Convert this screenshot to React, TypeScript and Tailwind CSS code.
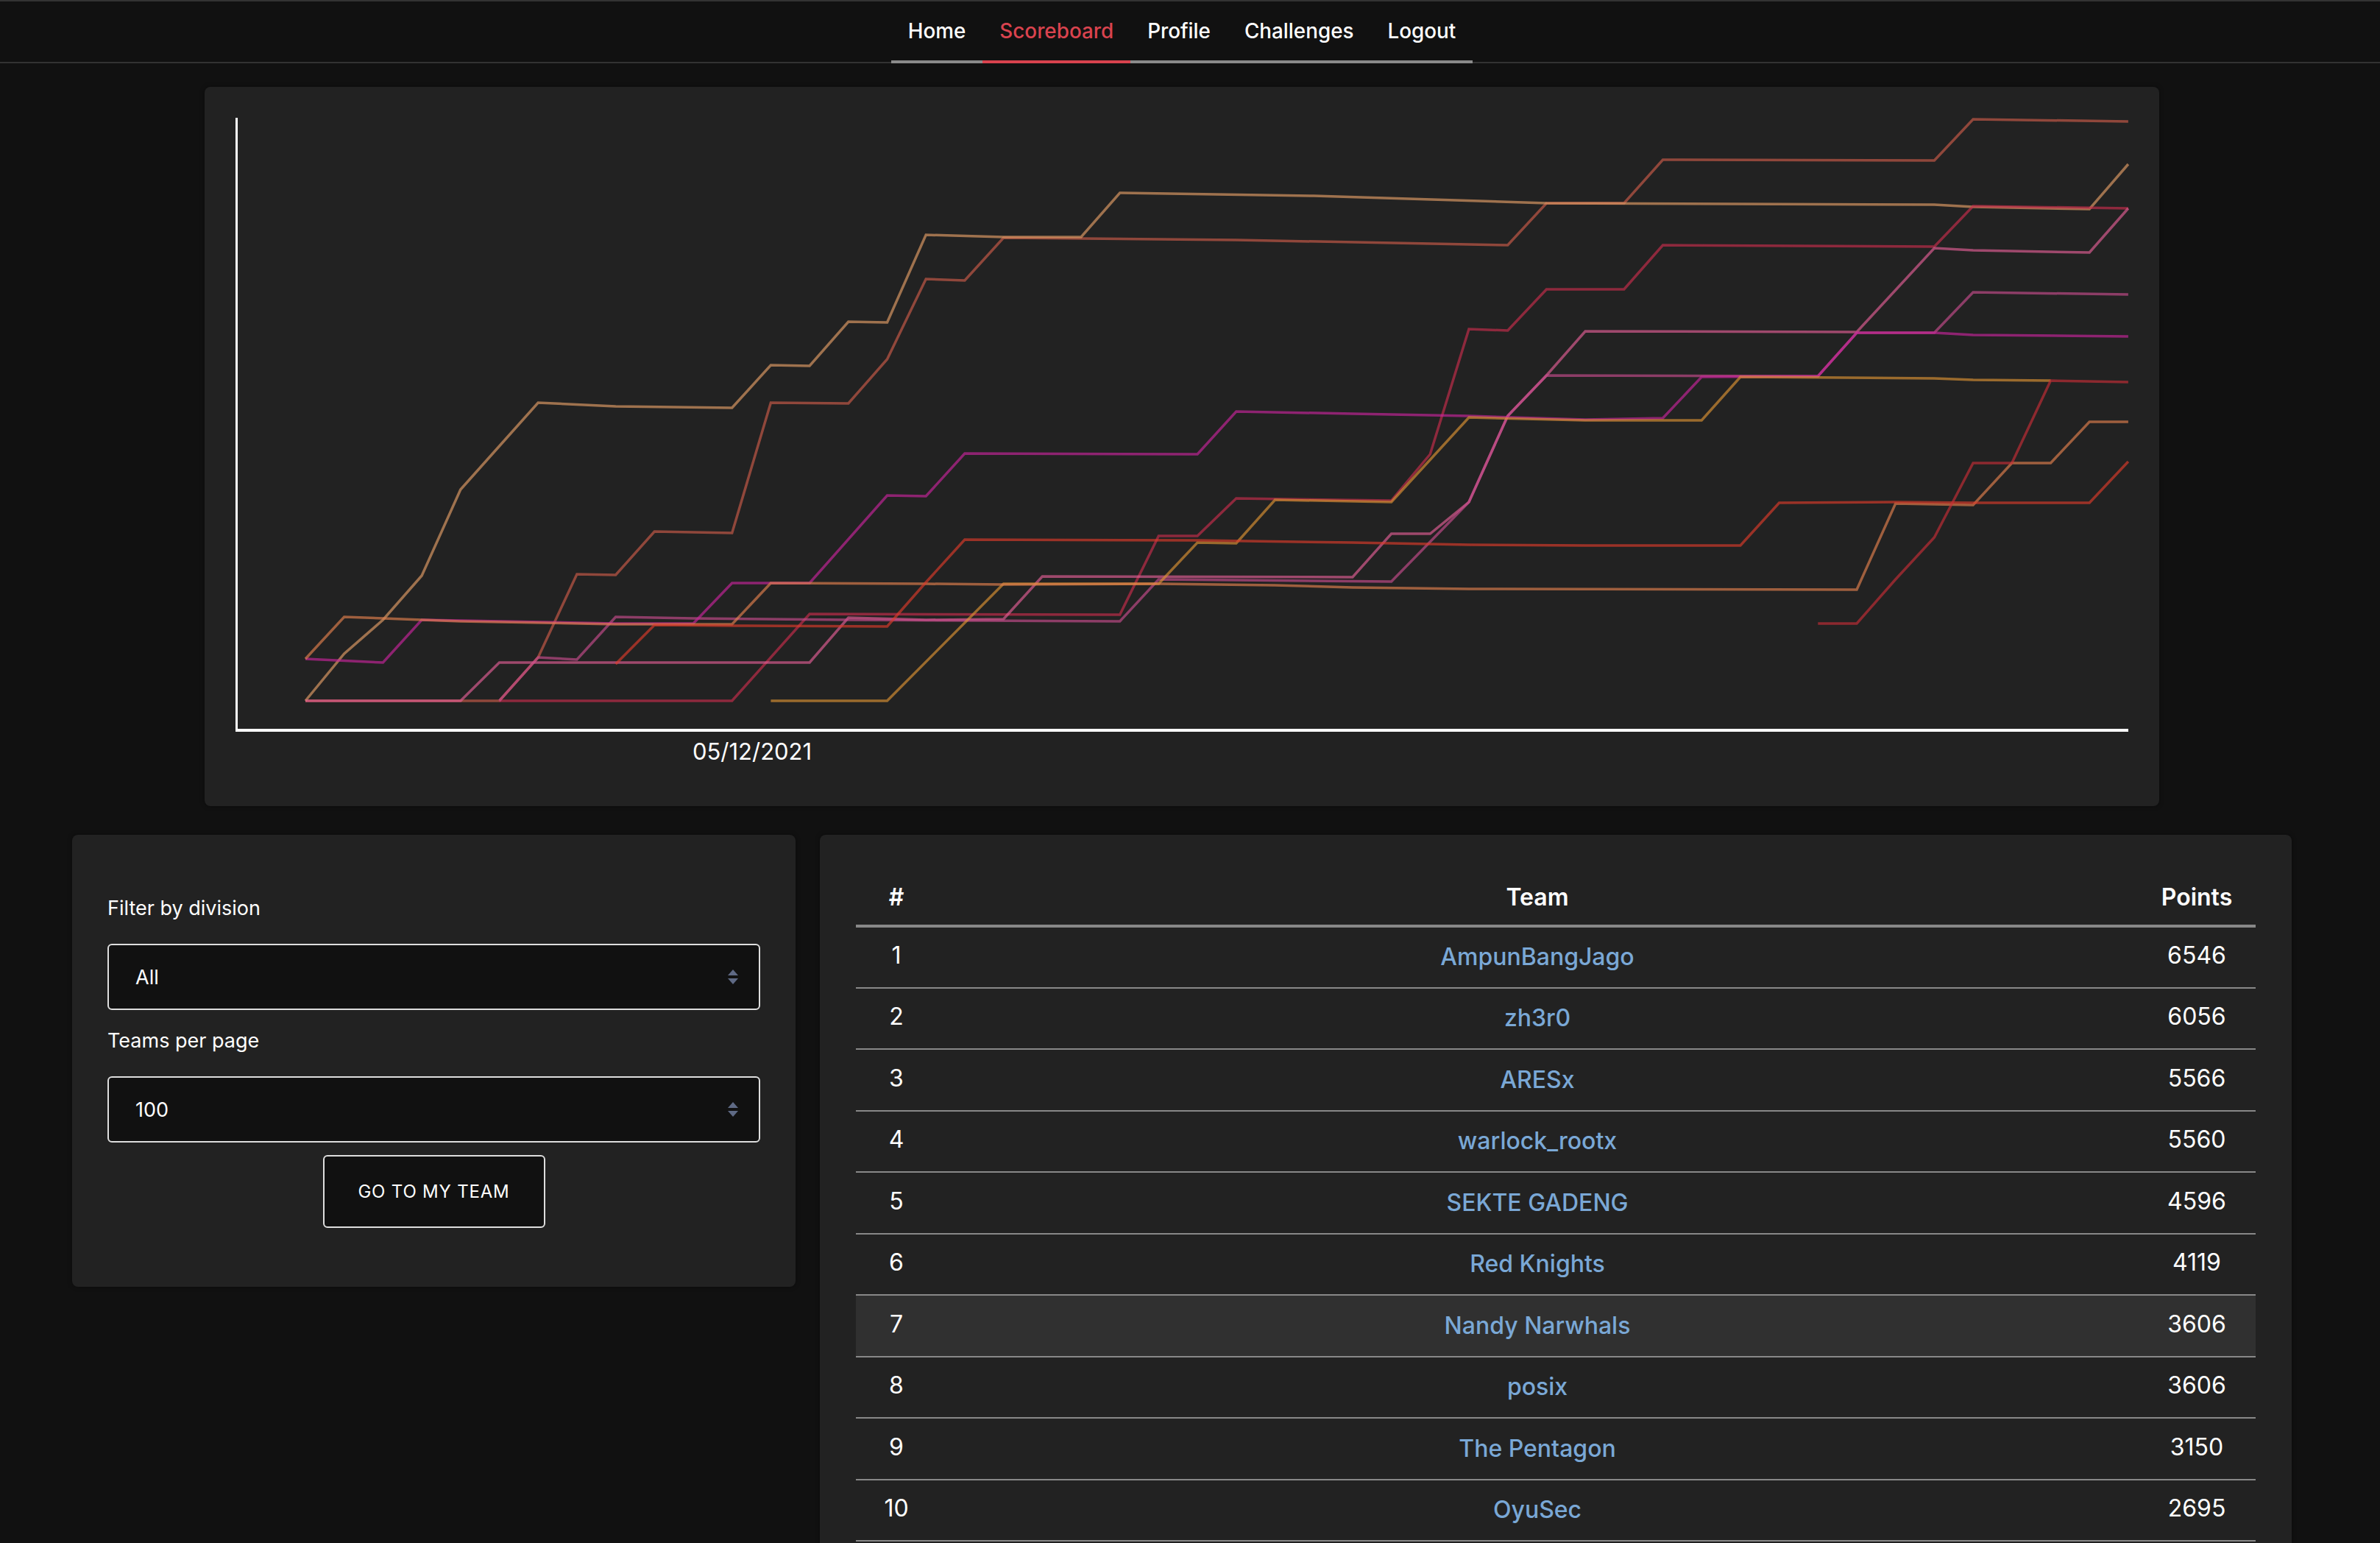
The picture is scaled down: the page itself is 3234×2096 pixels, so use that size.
const chartSeries = [
  {
    color: "#cc5c4a",
    points: [[0, 952], [5, 952], [6, 893], [7, 780], [8, 781], [9, 722], [11, 724], [12, 547], [14, 548], [15, 488], [16, 379], [17, 381], [18, 323], [24, 326], [31, 333], [32, 276], [34, 276], [35, 217], [42, 218], [43, 162], [47, 165]],
  },
  {
    color: "#e49e67",
    points: [[0, 952], [1, 888], [2, 842], [3, 782], [4, 665], [5, 606], [6, 547], [8, 552], [11, 554], [12, 496], [13, 497], [14, 437], [15, 438], [16, 319], [18, 322], [20, 322], [21, 262], [26, 266], [32, 276], [42, 278], [43, 281], [46, 284], [47, 223]],
  },
  {
    color: "#ca2e4d",
    points: [[5, 952], [11, 952], [13, 834], [21, 835], [22, 728], [23, 728], [24, 677], [28, 680], [29, 617], [30, 447], [31, 449], [32, 393], [34, 393], [35, 333], [42, 335], [43, 280], [47, 283]],
  },
  {
    color: "#e46097",
    points: [[0, 952], [4, 952], [5, 900], [13, 900], [14, 839], [16, 842], [18, 841], [19, 783], [27, 784], [28, 725], [29, 725], [30, 682], [31, 565], [32, 510], [33, 450], [40, 451], [42, 337], [43, 340], [46, 343], [47, 283]],
  },
  {
    color: "#c84d8e",
    points: [[5, 952], [6, 893], [7, 896], [8, 838], [10, 840], [14, 842], [21, 844], [22, 787], [28, 790], [30, 682], [31, 565], [32, 510], [39, 511], [40, 452], [42, 452], [43, 397], [47, 400]],
  },
  {
    color: "#ca259d",
    points: [[0, 895], [2, 900], [3, 842], [8, 847], [10, 847], [11, 792], [13, 792], [15, 673], [16, 674], [17, 616], [23, 617], [24, 559], [27, 562], [30, 565], [33, 570], [35, 568], [36, 512], [39, 511], [40, 452], [42, 452], [43, 455], [47, 457]],
  },
  {
    color: "#dd9434",
    points: [[12, 952], [15, 952], [18, 793], [22, 793], [23, 737], [24, 738], [25, 679], [28, 682], [30, 567], [33, 571], [36, 571], [37, 512], [42, 514], [43, 516], [45, 517]],
  },
  {
    color: "#e4814e",
    points: [[0, 895], [1, 838], [3, 842], [4, 844], [8, 848], [11, 848], [12, 792], [16, 793], [18, 794], [22, 793], [25, 795], [27, 798], [30, 800], [40, 801], [41, 684], [43, 686], [44, 629], [45, 629], [46, 573], [47, 573]],
  },
  {
    color: "#dd3c2b",
    points: [[8, 902], [9, 849], [11, 850], [15, 851], [16, 791], [17, 733], [23, 734], [27, 737], [30, 740], [33, 741], [37, 741], [38, 683], [41, 682], [43, 683], [46, 683], [47, 627]],
  },
  {
    color: "#c82e37",
    points: [[39, 847], [40, 847], [41, 787], [42, 730], [43, 629], [44, 629], [45, 517], [47, 519]],
  },
];

const teams = [
  { rank: 1, name: "AmpunBangJago", points: 6546 },
  { rank: 2, name: "zh3r0", points: 6056 },
  { rank: 3, name: "ARESx", points: 5566 },
  { rank: 4, name: "warlock_rootx", points: 5560 },
  { rank: 5, name: "SEKTE GADENG", points: 4596 },
  { rank: 6, name: "Red Knights", points: 4119 },
  { rank: 7, name: "Nandy Narwhals", points: 3606 },
  { rank: 8, name: "posix", points: 3606 },
  { rank: 9, name: "The Pentagon", points: 3150 },
  { rank: 10, name: "OyuSec", points: 2695 },
];

const navLinks = ["Home", "Scoreboard", "Profile", "Challenges", "Logout"];

function Chart() {
  // coordinates are page pixels, offset to the panel origin
  const toPath = (points: number[][]) =>
    points.map(([i, y]) => `${(415 + i * 52.7 - 278).toFixed(1)},${y - 118}`).join(" ");

  return (
    <svg width="2656" height="977" viewBox="0 0 2656 977" className="block">
      {chartSeries.map((series) => (
        <polyline
          key={series.color}
          points={toPath(series.points)}
          fill="none"
          stroke={series.color}
          strokeWidth="3.5"
          strokeOpacity="0.65"
          strokeLinejoin="miter"
        />
      ))}
      <path d="M43.5 42V874" fill="none" stroke="#fff" strokeWidth="3" />
      <path d="M42 874H2614" fill="none" stroke="#fff" strokeWidth="4" />
      <text x="744" y="914" fill="#fff" textAnchor="middle" fontSize="31" fontFamily="Inter, sans-serif">
        05/12/2021
      </text>
    </svg>
  );
}

function SelectBox({ value }: { value: string }) {
  return (
    <div className="flex h-[90px] items-center justify-between rounded-md border-2 border-[#dedede] bg-[#111111] pl-[36px] pr-[27px] text-[27px] text-white">
      <span className="pt-[2px]">{value}</span>
      <svg width="16" height="20" viewBox="0 0 16 20">
        <path d="M8 0L15 8H1Z M1 12H15L8 20Z" fill="#5f6a85" />
      </svg>
    </div>
  );
}

export default function App() {
  return (
    <div className="h-[2096px] overflow-hidden bg-[#111111] font-['Inter',sans-serif] text-white">
      <nav className="flex h-[86px] justify-center border-y-2 border-[#333333] pr-[22px]">
        <ul className="flex h-[86px] -mt-0.5 border-b-4 border-[#8a8a8a] text-[27.8px] font-medium">
          {navLinks.map((link) => (
            <li
              key={link}
              className={
                link === "Scoreboard"
                  ? "-mb-1 border-b-4 border-[#d9434e] px-[23px] pt-[22px] text-[#d9434e]"
                  : "px-[23px] pt-[22px]"
              }
            >
              {link}
            </li>
          ))}
        </ul>
      </nav>

      <div className="mr-[22px]">
        <section className="mx-[278px] mt-8 h-[977px] rounded-lg bg-[#222222] shadow-[0_0_6px_rgba(0,0,0,0.4)]">
          <Chart />
        </section>

        <div className="mx-[98px] mt-[39px] flex items-start gap-[33px]">
          <aside className="flex h-[614px] w-[983px] shrink-0 flex-col rounded-lg bg-[#222222] px-12 pt-[82px] shadow-[0_0_6px_rgba(0,0,0,0.4)]">
            <label className="text-[27px] leading-[36px]">Filter by division</label>
            <div className="mt-[30px]">
              <SelectBox value="All" />
            </div>
            <label className="mt-[24px] text-[27px] leading-[36px]">Teams per page</label>
            <div className="mt-[30px]">
              <SelectBox value="100" />
            </div>
            <button className="mx-auto mt-[17px] h-[99px] w-[302px] rounded-md border-2 border-[#dedede] bg-[#111111] text-[24px] tracking-[0.8px] text-white">
              GO TO MY TEAM
            </button>
          </aside>

          <main className="min-w-0 flex-1 rounded-t-lg bg-[#222222] px-[49px] pb-12 pt-[54px] shadow-[0_0_6px_rgba(0,0,0,0.4)]">
            <table className="w-full table-fixed border-collapse text-center text-[32px]">
              <thead>
                <tr className="h-[70px] border-b-4 border-[#888888]">
                  <th className="w-[110px] pb-[7px] font-semibold">#</th>
                  <th className="pb-[7px] font-semibold">Team</th>
                  <th className="w-[160px] pb-[7px] font-semibold">Points</th>
                </tr>
              </thead>
              <tbody>
                {teams.map((team) => (
                  <tr
                    key={team.rank}
                    className={
                      team.rank === 7
                        ? "h-[83.5px] border-b-2 border-[#888888] bg-[#303030]"
                        : "h-[83.5px] border-b-2 border-[#888888]"
                    }
                  >
                    <td className="pb-1">{team.rank}</td>
                    <td className="font-medium text-[#7aa8d6]">{team.name}</td>
                    <td className="pb-1">{team.points}</td>
                  </tr>
                ))}
              </tbody>
            </table>
          </main>
        </div>
      </div>
    </div>
  );
}
